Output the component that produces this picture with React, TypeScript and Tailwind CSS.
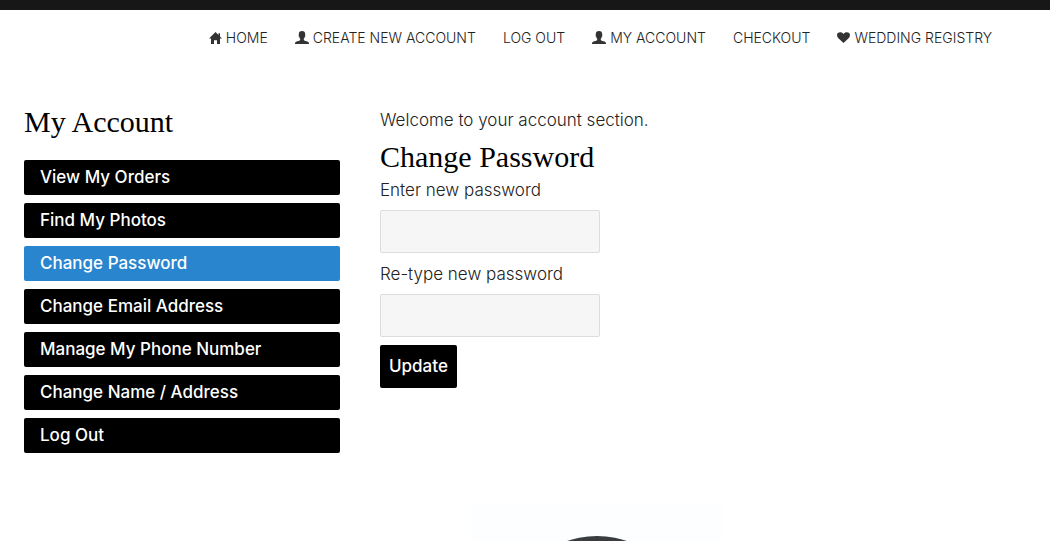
import React, { useState } from "react";
import clsx from "clsx";

type IconName = "home" | "user" | "heart";

const navItems: { label: string; href: string; icon?: IconName }[] = [
  { label: "HOME", href: "#home", icon: "home" },
  { label: "CREATE NEW ACCOUNT", href: "#create", icon: "user" },
  { label: "LOG OUT", href: "#logout" },
  { label: "MY ACCOUNT", href: "#account", icon: "user" },
  { label: "CHECKOUT", href: "#checkout" },
  { label: "WEDDING REGISTRY", href: "#registry", icon: "heart" },
];

const accountLinks = [
  { label: "View My Orders", href: "#orders" },
  { label: "Find My Photos", href: "#photos" },
  { label: "Change Password", href: "#password", active: true },
  { label: "Change Email Address", href: "#email" },
  { label: "Manage My Phone Number", href: "#phone" },
  { label: "Change Name / Address", href: "#address" },
  { label: "Log Out", href: "#logout" },
];

export default function App() {
  return (
    <div className="flex min-h-screen flex-col bg-white font-['Inter','Liberation_Sans',sans-serif] text-[17px] font-light text-[#222]">
      <div className="h-[10px] bg-[#171717]" />
      <TopNav />

      <main className="flex gap-10 px-6 pt-[52px]">
        <aside className="w-[316px] shrink-0">
          <Heading>My Account</Heading>
          <nav className="mt-[18px] flex flex-col gap-2">
            {accountLinks.map((link) => (
              <a
                key={link.label}
                href={link.href}
                className={clsx(
                  "rounded-xs px-4 py-1 leading-[27px] font-medium text-white",
                  link.active ? "bg-[#2986ce]" : "bg-black"
                )}
              >
                {link.label}
              </a>
            ))}
          </nav>
        </aside>

        <section className="min-w-0 flex-1 pt-1.5">
          <p className="mb-[5px] leading-6">Welcome to your account section.</p>
          <Heading>Change Password</Heading>
          <PasswordForm />
        </section>
      </main>

      <footer className="mt-[51px] flex justify-center pl-36">
        <FooterLogo />
      </footer>
    </div>
  );
}

function TopNav() {
  return (
    <nav className="flex justify-end gap-[27px] px-[58px] pt-4 text-sm leading-6">
      {navItems.map((item) => (
        <a key={item.label} href={item.href} className="flex items-center gap-1 whitespace-nowrap">
          {item.icon && <NavIcon name={item.icon} />}
          {item.label}
        </a>
      ))}
    </nav>
  );
}

function Heading({ children }: { children: React.ReactNode }) {
  return (
    <h2 className="font-['Liberation_Serif',serif] text-3xl leading-10 font-normal text-black">
      {children}
    </h2>
  );
}

function PasswordForm() {
  const [password, setPassword] = useState("");
  const [confirm, setConfirm] = useState("");

  return (
    <form onSubmit={(e) => e.preventDefault()} className="flex flex-col items-start">
      <Field id="new-password" label="Enter new password" value={password} onChange={setPassword} />
      <Field id="confirm-password" label="Re-type new password" value={confirm} onChange={setConfirm} />
      <button type="submit" className="h-[43px] rounded-xs bg-black px-[9px] font-medium text-white">
        Update
      </button>
    </form>
  );
}

function Field({ id, label, value, onChange }: { id: string; label: string; value: string; onChange: (v: string) => void }) {
  return (
    <div className="mb-2 flex flex-col">
      <label htmlFor={id} className="mb-[7px] leading-[26px]">{label}</label>
      <input
        id={id}
        type="password"
        value={value}
        onChange={(e) => onChange(e.target.value)}
        className="h-[43px] w-[220px] rounded-xs border border-[#ddd] bg-[#f6f6f6] px-3 outline-none focus:border-[#999]"
      />
    </div>
  );
}

function NavIcon({ name }: { name: IconName }) {
  if (name === "home") {
    return (
      <svg className="h-[14px] w-[13px] shrink-0 fill-[#333]" viewBox="0 0 13 14" aria-hidden="true">
        <path d="M6.5 1 0 7.4h2V13h3V9.2h3V13h3V7.4h2L11 5.4V2.2H9.5v1.7z" />
      </svg>
    );
  }
  if (name === "user") {
    return (
      <svg className="h-[14px] w-[14px] shrink-0 fill-[#333]" viewBox="0 0 14 14" aria-hidden="true">
        <path d="M7 0C4.800 0 3.800 1.200 3.800 3c0 .5 0 .8.1 1.100-.5.2-.3 1.500.3 1.700.2.9.5 1.500 1 2v1.200C4.900 10 0 10.200 0 12.200V13h14v-.8c0-2-4.900-2.200-5.200-3.200V7.800c.5-.5.8-1.100 1-2 .6-.2.8-1.500.3-1.700.1-.3.1-.6.1-1.100 0-1.800-1-3-3.200-3z" />
      </svg>
    );
  }
  return (
    <svg className="h-[14px] w-[13px] shrink-0 fill-[#333]" viewBox="0 0 13 14" aria-hidden="true">
      <path d="M6.500 12 1.100 6.900C-.3 5.300-.3 3.300.8 2.100 2.300.7 5.200.8 6.500 3 7.800.8 10.700.7 12.200 2.100c1.100 1.200 1.100 3.200-.3 4.800z" />
    </svg>
  );
}

function FooterLogo() {
  return (
    <svg className="h-[37px] w-[250px] bg-[#fcfeff]" viewBox="0 0 250 37" role="img" aria-label="Studio logo">
      <circle cx="125" cy="124" r="92" fill="#3a3d40" />
    </svg>
  );
}
